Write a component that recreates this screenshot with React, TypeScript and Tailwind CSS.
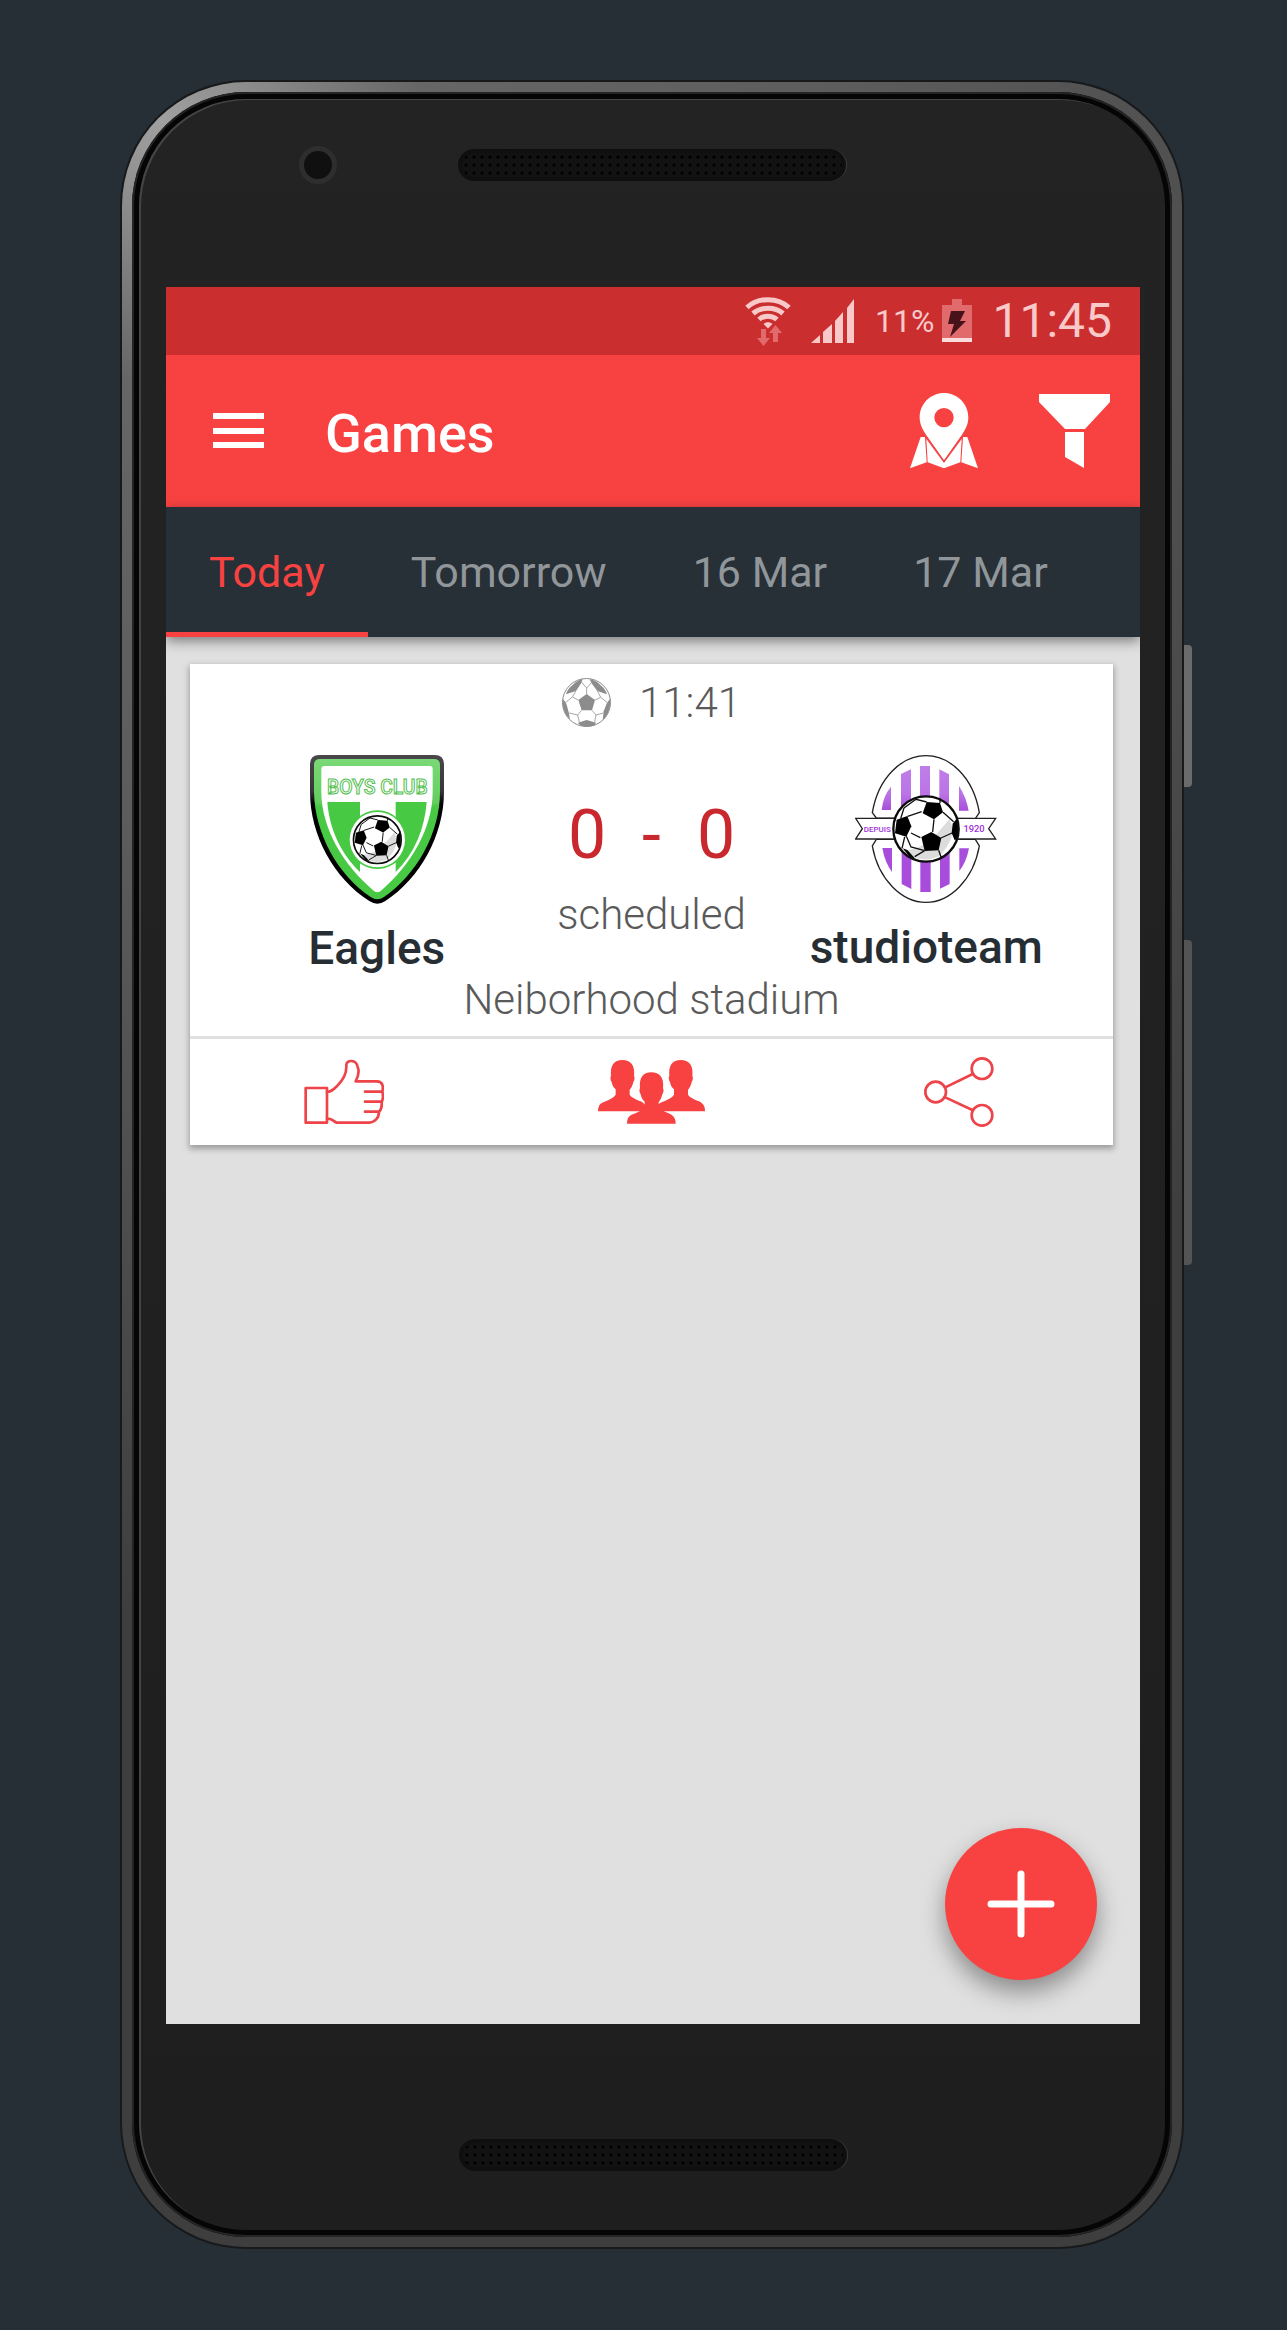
import { useState } from "react";
import type { ReactNode } from "react";

const TABS = ["Today", "Tomorrow", "16 Mar", "17 Mar"];

function WifiIcon() {
  return (
    <svg width="46" height="49" viewBox="0 0 46 49" fill="none" aria-hidden="true">
      <g stroke="#f9c9ca" strokeWidth="5">
        <path d="M2 10.5C13 0 33 0 44 10.5" />
        <path d="M8 16.5c8-7 22-7 30 0" />
        <path d="M14 22.5c5-4.500 13-4.500 18 0" />
      </g>
      <path d="M18.500 27c2.500-2.400 6.500-2.400 9 0L23 31.500z" fill="#f9c9ca" />
      <g fill="#e16a6c">
        <path d="M16 32h5v9h4l-6.500 8L12 41h4z" />
        <path d="M28 45h5v-9h4l-6.500-8-6.500 8h4z" />
      </g>
    </svg>
  );
}

function SignalIcon() {
  return (
    <svg width="44" height="45" viewBox="0 0 44 45" fill="#f9c9ca" aria-hidden="true">
      <path d="M0 44l9-8v8zM12 33l9-8v19h-9zM24 22l8-9v31h-8zM36 9l7-9v44h-7z" />
    </svg>
  );
}

function BatteryIcon() {
  return (
    <svg width="30" height="44" viewBox="0 0 30 44" aria-hidden="true">
      <path d="M10 0h10v6h10v33H0V6h10z" fill="#e16a6c" />
      <path d="M0 39h30v4H0z" fill="#fbdcdc" />
      <path d="M9 12h14l-5 10h6L8 38l4-13H6z" fill="#47121a" />
    </svg>
  );
}

function MapIcon() {
  return (
    <svg width="68" height="76" viewBox="0 0 204 228" fill="#fff" aria-hidden="true">
      <path
        fillRule="evenodd"
        d="M102 0C62 0 29 32 29 73c0 20 8 35 18 51l55 78 55-78c10-16 18-31 18-51C175 32 142 0 102 0zm0 45a29 29 0 110 58 29 29 0 010-58z"
      />
      <path d="M32 132h13l5 76-50 18z" />
      <path d="M49 138l53 72 53-72-4 70-49 18-49-18z" />
      <path d="M172 132h-13l-5 76 50 18z" />
      <path
        d="M46 128l56 77 56-77"
        fill="none"
        stroke="#f84242"
        strokeWidth="3"
      />
    </svg>
  );
}

function FunnelIcon() {
  return (
    <svg width="71" height="74" viewBox="0 0 71 74" fill="#fff" aria-hidden="true">
      <path d="M0 0h71v8L46 35H26L0 8zM26 38h19v36L26 63z" />
    </svg>
  );
}

function MenuIcon() {
  return (
    <svg width="51" height="36" viewBox="0 0 51 36" fill="#fff" aria-hidden="true">
      <path d="M0 0h51v6H0zM0 15h51v6H0zM0 29h51v6H0z" />
    </svg>
  );
}

function GrayBall() {
  return (
    <svg width="49" height="49" viewBox="0 0 147 147" aria-hidden="true">
      <circle cx="73.500" cy="73.500" r="72" fill="#fff" stroke="#8c8c8c" strokeWidth="3" />
      <g fill="#8c8c8c">
        <path d="M74 48l25 18-9 31H59L49 66z" />
        <path d="M31 22C42 10 52 5 62 3l-4 12-16 24-30 10c3-11 9-19 19-27z" />
        <path d="M116 22C105 10 95 5 83 3l5 12 18 24 29 10c-3-11-9-19-19-27z" />
        <path d="M2 62l10 12 8 28 4 22C8 110 0 87 2 62z" />
        <path d="M145 62l-10 12-10 26-3 26c16-14 24-37 23-64z" />
        <path d="M48 134l26-8 28 8-4 8c-13 5-32 5-44 0z" />
      </g>
      <path
        d="M74 48V30M74 30L58 12M74 30l16-18M99 66l17-8-11-22M116 58l23 18M90 97l12 14 22-6M102 111l-4 21M59 97l-12 14-30-7M47 111l5 21M49 66l-18-9 11-19M31 57L8 76"
        stroke="#a8a8a8"
        strokeWidth="3"
        fill="none"
      />
    </svg>
  );
}

// black and white ball shared by both crests, drawn around 0,0 with radius 100
function CrestBall() {
  return (
    <>
      <circle r="99" fill="#fff" />
      <path d="M-72 62Q-10 74 70-30Q98 20 40 82Q-20 108-72 62z" fill="#dcdcdc" />
      <g fill="#000">
        <path d="M2-81l40 3 9 28-27 21-34-18z" />
        <path d="M-88-28l32-11 12 31-15 31-34-10z" />
        <path d="M-14 24l30-15 30 18-8 37-42 2z" />
        <path d="M96-36L80-16 77 12l9 22 10-6z" />
        <path d="M-70 58l14 5 24 26-16-4z" />
      </g>
      <path
        d="M-55-38l42-14M24-29l-4 38M-45 12l28 14M51-50l32 28M-59 22l14 32 41 11M45 27l33-15M-4 65l-30 18M38 64l8 22M2-81l-32-8-36 26M42-78v-14M-66-63l-10 32M-64 24l-8 34"
        stroke="#111"
        strokeWidth="4"
        fill="none"
      />
      <circle r="98" fill="none" stroke="#0c0c0c" strokeWidth="7" />
    </>
  );
}

function EaglesCrest() {
  return (
    <svg width="134" height="149" viewBox="0 0 402 447" role="img" aria-label="Boys Club crest">
      <defs>
        <linearGradient id="shieldEdge" x1="0" y1="0" x2="0" y2="1">
          <stop offset="0" stopColor="#4a474b" />
          <stop offset="0.24" stopColor="#3a373b" />
          <stop offset="0.33" stopColor="#000" />
        </linearGradient>
        <linearGradient id="shieldFill" x1="0" y1="0" x2="0" y2="1">
          <stop offset="0" stopColor="#7ad976" />
          <stop offset="0.31" stopColor="#62cf5e" />
          <stop offset="0.34" stopColor="#47c943" />
        </linearGradient>
      </defs>
      <path
        d="M28 0H374Q402 0 402 28V110C402 240 330 370 226 438Q202 454 178 438C72 370 0 240 0 110V28Q0 0 28 0z"
        fill="url(#shieldEdge)"
      />
      <path
        d="M30 12H372Q390 12 390 30V110C390 236 318 360 222 426Q202 440 182 426C84 360 14 236 12 110V30Q12 12 30 12z"
        fill="url(#shieldFill)"
      />
      <path
        d="M44 33H360Q368 33 368 42V110C368 220 302 330 212 408Q202 416 192 408C100 330 34 220 34 110V42Q34 33 44 33z"
        fill="#fff"
      />
      <path d="M52 141h98v210C92 296 58 220 52 141zM257 141h93c-6 80-36 154-93 210z" fill="#47c943" />
      <circle cx="202" cy="254" r="88" fill="#47c943" />
      <circle cx="202" cy="254" r="83" fill="#fff" />
      <g transform="translate(202 254) scale(0.73)">
        <CrestBall />
      </g>
      <text
        x="202"
        y="118"
        textAnchor="middle"
        fontFamily="Roboto, sans-serif"
        fontWeight="500"
        fontSize="58"
        fill="#fff"
        stroke="#52c04e"
        strokeWidth="3"
      >
        BOYS CLUB
      </text>
    </svg>
  );
}

function StudioCrest() {
  return (
    <svg width="142" height="148" viewBox="48 45 426 444" role="img" aria-label="Depuis 1920 crest">
      <defs>
        <linearGradient id="stripe" gradientUnits="userSpaceOnUse" x1="0" y1="78" x2="0" y2="456">
          <stop offset="0" stopColor="#c07ee8" />
          <stop offset="0.22" stopColor="#bb74e6" />
          <stop offset="0.35" stopColor="#a74fdb" />
          <stop offset="1" stopColor="#a84bdc" />
        </linearGradient>
      </defs>
      <g fill="#fff" stroke="#222" strokeWidth="4">
        <path d="M112 234l-12-16C118 110 190 47 261 47s142 63 160 171l-12 18z" />
        <path d="M112 298l-12 20C118 420 190 487 261 487s142-67 160-169l-12-20z" />
      </g>
      <g fill="url(#stripe)">
        <path d="M128 210q4-42 28-70v70zM186 102l30-14v130h-30zM243 78h30v120h-30zM301 88l29 15v112h-29zM360 138q22 34 29 74h-29z" />
        <path d="M130 324h29v72q-22-30-29-72zM188 310h29v137l-29-15zM244 340h31v116h-31zM303 310h29v122l-29 14zM361 325h29q-8 42-29 68z" />
      </g>
      <path d="M50 235h420l-21 31 21 31H50l20-31z" fill="#fff" stroke="#222" strokeWidth="4" />
      <g
        fontFamily="Roboto, sans-serif"
        fontWeight="500"
        fill="#a030dc"
        textAnchor="middle"
      >
        <text x="115" y="275" fontSize="24">
          DEPUIS
        </text>
        <text x="405" y="277" fontSize="28">
          1920
        </text>
      </g>
      <g transform="translate(261 267)">
        <CrestBall />
      </g>
    </svg>
  );
}

function LikeIcon() {
  return (
    <svg
      width="80"
      height="66"
      viewBox="0 0 240 198"
      fill="none"
      stroke="#ee4349"
      strokeWidth="8"
      strokeLinecap="round"
      strokeLinejoin="round"
      aria-hidden="true"
    >
      <path d="M5 87h64v104H5z" />
      <path d="M69 99c14 0 22-10 32-20 18-18 26-34 26-54V18c0-16 30-18 34 6 6 14 0 32-6 43h64c16 0 20 14 16 31 3 12 2 24-2 31 1 12-2 24-8 30 0 18-14 32-32 32H98c-8-2-12-13-29-12" />
      <path d="M183 98h50M183 128h48M183 158h40" />
    </svg>
  );
}

function PeopleIcon() {
  const person =
    "M0 154C1 136 6 130 18 126C36 118 48 112 53 104V88C46 82 42 74 41 66C37 60 36 52 39 48C36 16 48 0 73 0C98 0 112 16 108 48C111 52 110 60 106 66C104 76 100 84 95 90V104C100 112 114 118 128 124C140 130 146 138 146 154z";
  return (
    <svg width="107" height="64" viewBox="0 0 321 192" fill="#f84242" aria-hidden="true">
      <path d={person} />
      <path d={person} transform="translate(175 0)" />
      <path d="M130 122c-8-9-10-22-10-34l12-58h54l14 58c0 12-2 25-10 34z" fill="#fff" />
      <path d={person} transform="translate(87 37)" />
    </svg>
  );
}

function ShareIcon() {
  return (
    <svg
      width="70"
      height="70"
      viewBox="0 0 210 210"
      fill="none"
      stroke="#ee4349"
      strokeWidth="8"
      aria-hidden="true"
    >
      <circle cx="35" cy="105" r="31" />
      <circle cx="174" cy="35" r="31" />
      <circle cx="174" cy="175" r="31" />
      <path d="M64 91l82-40M64 121l81 38" />
    </svg>
  );
}

function Speaker() {
  return (
    <div className="h-8 w-full rounded-full border-4 border-[#0f0f0f] bg-[#121212] bg-[radial-gradient(circle,#000_1px,transparent_2px)] bg-[length:8px_8px] shadow-[1px_0_0_#3a3a3a]" />
  );
}

function Team({ name, crest }: { name: string; crest: ReactNode }) {
  return (
    <div className="flex flex-col items-center gap-4">
      {crest}
      <h2 className="text-[46px] leading-14 font-medium text-[#262e34]">{name}</h2>
    </div>
  );
}

function GameCard() {
  return (
    <article className="bg-white shadow-[0_3px_6px_1px_rgba(0,0,0,0.3)]">
      <div className="flex items-center justify-center gap-7 pt-[14px] text-[42px] leading-12 font-light text-[#5a5a5a]">
        <GrayBall />
        <time>11:41</time>
      </div>
      <div className="mt-7 grid grid-cols-[1fr_176px_1fr]">
        <Team name="Eagles" crest={<EaglesCrest />} />
        <div className="flex flex-col items-center gap-5 pt-11">
          <p className="flex gap-9 text-[68px] leading-[72px] text-[#c9292e]">
            <span>0</span>
            <span>-</span>
            <span>0</span>
          </p>
          <p className="text-[42px] leading-12 font-light text-[#5a5a5a]">scheduled</p>
        </div>
        <Team name="studioteam" crest={<StudioCrest />} />
      </div>
      <p className="pb-3 text-center text-[42px] leading-12 font-light text-[#5a5a5a]">
        Neiborhood stadium
      </p>
      <div className="grid h-[109px] grid-cols-3 border-t-[3px] border-[#e0e0e0]">
        <button aria-label="Like" className="flex items-center justify-center">
          <LikeIcon />
        </button>
        <button aria-label="Players" className="flex items-center justify-center">
          <PeopleIcon />
        </button>
        <button aria-label="Share" className="flex items-center justify-center">
          <ShareIcon />
        </button>
      </div>
    </article>
  );
}

function Screen() {
  const [tab, setTab] = useState("Today");

  return (
    <main className="relative flex flex-1 flex-col overflow-hidden bg-[#e0e0e0]">
      <div className="flex h-[68px] items-center justify-end bg-[#cb2e2e] pr-7 text-[#f9c9ca]">
        <WifiIcon />
        <span className="ml-5">
          <SignalIcon />
        </span>
        <span className="ml-5 text-[32px]">11%</span>
        <span className="ml-2">
          <BatteryIcon />
        </span>
        <span className="ml-5 text-[48px]">11:45</span>
      </div>

      <header className="flex h-[152px] items-center bg-[#f84242] pr-[30px] pl-[47px]">
        <button aria-label="Menu">
          <MenuIcon />
        </button>
        <h1 className="ml-[61px] flex-1 pt-1 text-[54px] font-medium text-white">Games</h1>
        <button aria-label="Map">
          <MapIcon />
        </button>
        <button aria-label="Filter" className="ml-[61px]">
          <FunnelIcon />
        </button>
      </header>

      <nav className="z-10 flex h-[130px] bg-[#272f37] shadow-[0_4px_12px_rgba(0,0,0,0.45)]">
        {TABS.map((t) => (
          <button
            key={t}
            onClick={() => setTab(t)}
            className={
              "border-b-[5px] px-[43px] pt-[6px] text-[43px] whitespace-nowrap " +
              (t === tab ? "border-[#f84242] text-[#f84242]" : "border-transparent text-[#90969a]")
            }
          >
            {t}
          </button>
        ))}
      </nav>

      <div className="pt-[27px] pr-[27px] pl-6">
        <GameCard />
      </div>

      <button
        aria-label="Add game"
        className="absolute right-[43px] bottom-11 flex size-[152px] items-center justify-center rounded-full bg-[#f84242] shadow-[0_12px_24px_rgba(0,0,0,0.38)]"
      >
        <svg width="68" height="68" viewBox="0 0 68 68" aria-hidden="true">
          <path d="M34 4v60M4 34h60" stroke="#fff" strokeWidth="7" strokeLinecap="round" />
        </svg>
      </button>
    </main>
  );
}

export default function App() {
  return (
    <div className="flex min-h-screen flex-col bg-[#262e36] pt-20 pr-[103px] pb-[81px] pl-[120px] font-[family-name:Roboto,sans-serif]">
      <div className="relative flex flex-1 flex-col rounded-[126px] bg-[#17191b] p-[2px]">
        {/* side keys */}
        <div className="absolute top-[565px] -right-2 h-[142px] w-2 rounded-r-sm bg-[#6b6b6b]" />
        <div className="absolute top-[860px] -right-2 h-[325px] w-2 rounded-r-sm bg-[#545454]" />

        <div className="flex flex-1 flex-col rounded-[124px] bg-[radial-gradient(circle_at_40px_40px,#a0a0a0_0,#666_260px,#5c5c5c_700px,#3e3e3e_1500px)] p-[10px]">
          <div className="flex flex-1 flex-col rounded-[114px] bg-[#050505] p-[7px] shadow-[inset_0_0_0_2px_#242424]">
            <div className="flex flex-1 flex-col rounded-[107px] bg-linear-to-b from-[#232323] to-[#1e1e1e] pr-[25px] pl-[27px] shadow-[inset_2px_1px_0_#444]">
              <div className="-mr-[25px] -ml-[27px] grid h-[188px] grid-cols-[1fr_388px_1fr] items-center pb-14">
                <div className="ml-40 size-[38px] rounded-full border-[5px] border-[#2e2e2e] bg-[#101010]" />
                <Speaker />
              </div>
              <Screen />
              <div className="mx-auto flex h-[206px] w-[388px] items-center pt-14">
                <Speaker />
              </div>
            </div>
          </div>
        </div>
      </div>
    </div>
  );
}
